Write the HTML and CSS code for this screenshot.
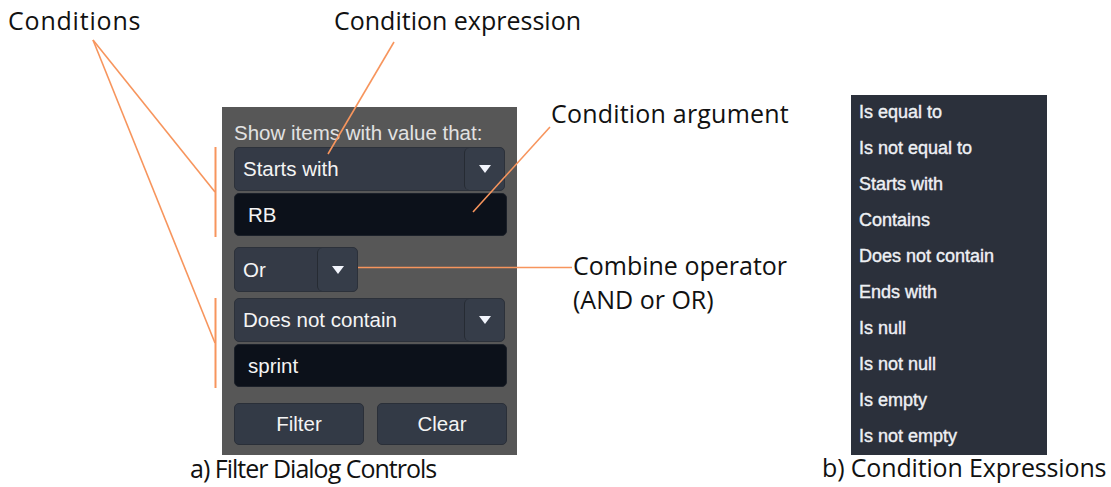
FILE: index.html
```html
<!DOCTYPE html>
<html>
<head>
    <title>Filter Dialog Controls</title>
    <meta name="viewport" content="width=device-width, initial-scale=1.0">
    <link rel="stylesheet" href="styles.css">
</head>

<body>

<div class="figure">

    <div class="part part-a">
        <div class="filter-dialog">
            <div class="dialog-title">Show items with value that:</div>

            <div class="select select-wide">
                <span class="select-value">Starts with</span>
                <span class="select-arrow"><svg width="12" height="8" viewBox="0 0 12 8"><path d="M0 0h12L6 8z"/></svg></span>
            </div>
            <div class="text-input">RB</div>

            <div class="select select-short">
                <span class="select-value">Or</span>
                <span class="select-arrow"><svg width="12" height="8" viewBox="0 0 12 8"><path d="M0 0h12L6 8z"/></svg></span>
            </div>

            <div class="select select-wide select-second">
                <span class="select-value">Does not contain</span>
                <span class="select-arrow"><svg width="12" height="8" viewBox="0 0 12 8"><path d="M0 0h12L6 8z"/></svg></span>
            </div>
            <div class="text-input">sprint</div>

            <div class="dialog-buttons">
                <button>Filter</button>
                <button>Clear</button>
            </div>
        </div>
        <div class="caption caption-a">a) Filter Dialog Controls</div>
    </div>

    <div class="part part-b">
        <ul class="expr-list">
            <li>Is equal to</li>
            <li>Is not equal to</li>
            <li>Starts with</li>
            <li>Contains</li>
            <li>Does not contain</li>
            <li>Ends with</li>
            <li>Is null</li>
            <li>Is not null</li>
            <li>Is empty</li>
            <li>Is not empty</li>
        </ul>
        <div class="caption caption-b">b) Condition Expressions</div>
    </div>

    <!-- callouts -->
    <div class="label label-conditions">Conditions</div>
    <div class="label label-expression">Condition expression</div>
    <div class="label label-argument">Condition argument</div>
    <div class="label label-combine">Combine operator<br>(AND or OR)</div>

    <svg class="leaders" width="1111" height="487" viewBox="0 0 1111 487">
        <line x1="93" y1="40" x2="215" y2="192"/>
        <line x1="93" y1="40" x2="215" y2="343"/>
        <line class="bracket" x1="215.5" y1="147" x2="215.5" y2="237"/>
        <line class="bracket" x1="215.5" y1="298" x2="215.5" y2="388"/>
        <line x1="394" y1="42" x2="328" y2="154"/>
        <line x1="550" y1="127" x2="473" y2="212"/>
        <line x1="358" y1="267.5" x2="572" y2="267.5"/>
    </svg>

</div>

</body>
</html>
```

FILE: styles.css
```css
body {
    margin: 0;
    padding: 0;
    background: white;
    font-family: "Liberation Sans", Arial, sans-serif;
}

.figure {
    position: relative;
    width: 1111px;
    height: 487px;
    display: flex;
    align-items: flex-start;
    overflow: hidden;
}

/* a) filter dialog */

.part-a {
    margin-left: 222px;
    margin-top: 107px;
    width: 295px;
}

.filter-dialog {
    box-sizing: border-box;
    width: 295px;
    height: 348px;
    padding: 14px 10px 10px 12px;
    background: #575757;
    display: flex;
    flex-direction: column;
    align-items: flex-start;
}

.dialog-title {
    font-size: 20.5px;
    line-height: 24px;
    color: #e2e2e2;
    white-space: nowrap;
}

.select {
    box-sizing: border-box;
    display: flex;
    height: 44px;
    margin-top: 2px;
    background: #343a46;
    border: 1px solid #2c313a;
    border-radius: 5px;
    color: #f4f4f4;
    font-size: 20.5px;
}

.select-wide {
    width: 271px;
}

.select-short {
    width: 124px;
    height: 45px;
    margin-top: 11px;
}

.select-second {
    margin-top: 6px;
}

.select-value {
    flex: 1;
    display: flex;
    align-items: center;
    padding-left: 8px;
}

.select-arrow {
    box-sizing: border-box;
    width: 40px;
    display: flex;
    align-items: center;
    justify-content: center;
    background: #363d49;
    border-left: 1px solid #262b33;
    border-radius: 5px;
}

.select-arrow svg {
    fill: #f2f5fc;
}

.text-input {
    box-sizing: border-box;
    width: 273px;
    height: 43px;
    margin-top: 2px;
    padding-left: 13px;
    display: flex;
    align-items: center;
    background: #0c111a;
    border: 1px solid #1b2029;
    border-radius: 5px;
    color: #f4f4f4;
    font-size: 20.5px;
}

.dialog-buttons {
    display: flex;
    gap: 13px;
    margin-top: 16px;
}

.dialog-buttons button {
    width: 130px;
    height: 42px;
    background: #333a46;
    border: 1px solid #2a2f38;
    border-radius: 5px;
    color: #f4f4f4;
    font-family: "Liberation Sans", Arial, sans-serif;
    font-size: 20.5px;
    padding: 0;
}

/* b) expression list */

.part-b {
    margin-left: 334px;
    margin-top: 95px;
    width: 196px;
}

.expr-list {
    list-style: none;
    margin: 0;
    padding: 0;
    width: 196px;
    height: 360px;
    background: #2b303b;
}

.expr-list li {
    height: 36px;
    line-height: 35px;
    padding-left: 8px;
    font-size: 18px;
    color: #eef0f4;
    -webkit-text-stroke: 0.4px #eef0f4;
    white-space: nowrap;
}

/* captions and callouts */

.caption,
.label {
    font-family: "Open Sans", "Noto Sans", sans-serif;
    font-size: 25px;
    color: #111;
    white-space: nowrap;
}

.caption {
    line-height: 24px;
}

.caption-a {
    margin-top: 1px;
    margin-left: -32px;
    letter-spacing: -1px;
}

.caption-b {
    margin-left: -29px;
    letter-spacing: -0.15px;
}

.label {
    position: absolute;
    line-height: 30px;
}

.label-conditions {
    left: 8px;
    top: 5px;
    letter-spacing: 0.8px;
}

.label-expression {
    left: 334px;
    top: 5px;
}

.label-argument {
    left: 551px;
    top: 98px;
    letter-spacing: 0.2px;
}

.label-combine {
    left: 573px;
    top: 248px;
    line-height: 34px;
}

.leaders {
    position: absolute;
    left: 0;
    top: 0;
    pointer-events: none;
}

.leaders line {
    stroke: #f7955d;
    stroke-width: 1.6;
}

.leaders .bracket {
    stroke-width: 2;
}
```
